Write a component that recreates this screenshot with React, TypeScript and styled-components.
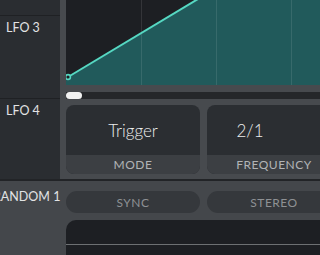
import styled, { createGlobalStyle } from "styled-components";

const GlobalStyle = createGlobalStyle`
  html, body {
    margin: 0;
    padding: 0;
    background: #44474b;
    overflow: hidden;
  }
  body {
    font-family: Lato, "Open Sans", "Liberation Sans", sans-serif;
  }
`;

const Page = styled.div`
  width: 100vw;
  min-width: 273px;
  height: 255px;
  overflow: hidden;
  display: flex;
  flex-direction: column;
`;

const TopSection = styled.div`
  display: flex;
  height: 179px;
  flex-shrink: 0;
`;

const Sidebar = styled.div`
  width: 60px;
  flex-shrink: 0;
  display: flex;
  flex-direction: column;
  background: #2a2d31;
`;

const SideRow = styled.div<{ $height?: number }>`
  height: ${(p) => (p.$height ? `${p.$height}px` : "auto")};
  flex: ${(p) => (p.$height ? "0 0 auto" : "1")};
  border-bottom: ${(p) => (p.$height ? "1px solid #1f2124" : "none")};
  padding-top: 4px;
  box-sizing: content-box;
`;

const SideText = styled.div<{ $indent: number }>`
  margin-left: ${(p) => p.$indent}px;
  font-size: 12.5px;
  line-height: 1.2;
  color: #e2e3e4;
  white-space: nowrap;
`;

const Editor = styled.div`
  flex: 1;
  min-width: 0;
  overflow: hidden;
  background: #474a4e;
  padding: 0 0 5px 6px;
  display: flex;
  flex-direction: column;
`;

const GraphBox = styled.div`
  height: 85px;
  flex-shrink: 0;
  background: #1d1f23;
  overflow: hidden;
`;

const ScrollTrack = styled.div`
  margin-top: 7px;
  height: 7px;
  flex-shrink: 0;
  background: #25272a;
`;

const Thumb = styled.div`
  width: 16px;
  height: 7px;
  border-radius: 4px;
  background: #f2f2f2;
`;

const PanelRow = styled.div`
  margin-top: 6px;
  display: flex;
  gap: 7px;
  flex: 1;
`;

const Panel = styled.div`
  flex: 0 0 134px;
  display: flex;
  flex-direction: column;
  border-radius: 8px;
  overflow: hidden;
  background: #2b2e32;
`;

const Value = styled.div`
  height: 50px;
  display: flex;
  align-items: center;
  padding-top: 3px;
  box-sizing: border-box;
`;

const ValueText = styled.div`
  flex: 1;
  text-align: center;
  font-size: 17px;
  font-weight: 300;
  line-height: 1.2;
  color: #eceded;
`;

const SideSlot = styled.div`
  width: 48px;
  flex-shrink: 0;
`;

const Label = styled.div`
  flex: 1;
  display: flex;
  align-items: center;
  justify-content: center;
  background: #3c3f43;
  font-size: 12px;
  letter-spacing: 0.5px;
  color: #b2b4b6;
  white-space: nowrap;
`;

const Separator = styled.div`
  height: 2px;
  flex-shrink: 0;
  background: #222427;
`;

const BottomSection = styled.div`
  flex: 1;
  display: flex;
  background: #44474b;
`;

const BottomSide = styled.div`
  width: 60px;
  flex-shrink: 0;
  padding-top: 8px;
`;

const BottomMain = styled.div`
  flex: 1;
  min-width: 0;
  overflow: hidden;
  padding: 10px 0 0 6px;
  display: flex;
  flex-direction: column;
  gap: 7px;
`;

const ButtonRow = styled.div`
  display: flex;
  gap: 7px;
`;

const ToggleButton = styled.div`
  flex: 0 0 134px;
  height: 22px;
  border-radius: 11px;
  background: #35383c;
  display: flex;
  align-items: center;
  justify-content: center;
  font-size: 12px;
  letter-spacing: 0.5px;
  color: #8e9194;
  white-space: nowrap;
`;

const DarkPanel = styled.div`
  height: 40px;
  padding-top: 24px;
  box-sizing: border-box;
  border-top-left-radius: 10px;
  background: #1d1f23;
`;

const HLine = styled.div`
  height: 1px;
  background: #6d7073;
`;

const teal = "#56d8c2";

function LfoGraph() {
  const slope = 0.6;
  const x0 = 2;
  const y0 = 77;
  const x1 = 220;
  const y1 = y0 - (x1 - x0) * slope;
  return (
    <svg width="400" height="85" viewBox="0 0 400 85">
      <polygon
        points={`0,${y0} ${x0},${y0} ${x1},${y1} 400,${y1} 400,85 0,85`}
        fill="#215a5b"
      />
      {[75, 150, 225, 300, 375].map((x) => (
        <line
          key={x}
          x1={x + 0.5}
          y1="0"
          x2={x + 0.5}
          y2="85"
          stroke="rgba(255,255,255,0.1)"
          strokeWidth="1"
        />
      ))}
      <line x1={x0} y1={y0} x2={x1} y2={y1} stroke={teal} strokeWidth="2" />
      <circle cx={x0} cy={y0} r="2.4" fill="#1d1f23" stroke={teal} strokeWidth="1.6" />
    </svg>
  );
}

export default function App() {
  return (
    <Page>
      <GlobalStyle />
      <TopSection>
        <Sidebar>
          <SideRow $height={11} />
          <SideRow $height={78}>
            <SideText $indent={6}>LFO 3</SideText>
          </SideRow>
          <SideRow>
            <SideText $indent={6}>LFO 4</SideText>
          </SideRow>
        </Sidebar>
        <Editor>
          <GraphBox>
            <LfoGraph />
          </GraphBox>
          <ScrollTrack>
            <Thumb />
          </ScrollTrack>
          <PanelRow>
            <Panel>
              <Value>
                <ValueText>Trigger</ValueText>
              </Value>
              <Label>MODE</Label>
            </Panel>
            <Panel>
              <Value>
                <ValueText>2/1</ValueText>
                <SideSlot />
              </Value>
              <Label>FREQUENCY</Label>
            </Panel>
          </PanelRow>
        </Editor>
      </TopSection>
      <Separator />
      <BottomSection>
        <BottomSide>
          <SideText $indent={-7}>RANDOM 1</SideText>
        </BottomSide>
        <BottomMain>
          <ButtonRow>
            <ToggleButton>SYNC</ToggleButton>
            <ToggleButton>STEREO</ToggleButton>
          </ButtonRow>
          <DarkPanel>
            <HLine />
          </DarkPanel>
        </BottomMain>
      </BottomSection>
    </Page>
  );
}
